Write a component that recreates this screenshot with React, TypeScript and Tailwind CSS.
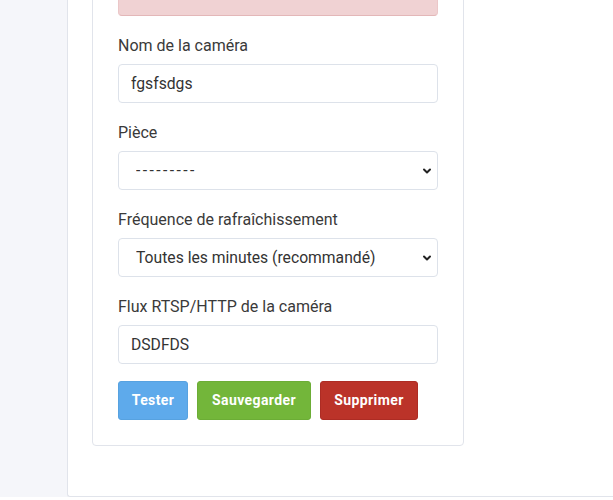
import { useState } from 'react';

const fieldClass =
  'w-full h-[39px] rounded-[4px] border border-[#dde2ea] bg-white px-3 text-[15.7px] text-[#333] outline-none';

const labelClass = 'block mb-2 text-[16px] leading-5 text-[#3a3a3a]';

const Chevron = () => (
  <svg
    className="pointer-events-none absolute right-[6px] top-1/2 -translate-y-1/2 w-[10px] h-[10px] text-[#222]"
    viewBox="0 0 10 10"
    fill="none"
    stroke="currentColor"
    strokeWidth="2"
    strokeLinecap="round"
    strokeLinejoin="round"
  >
    <path d="M2 3.5 5 6.5 8 3.5" />
  </svg>
);

const App = () => {
  const [name, setName] = useState('fgsfsdgs');
  const [room, setRoom] = useState('');
  const [freq, setFreq] = useState('60');
  const [url, setUrl] = useState('DSDFDS');

  return (
    <div
      className="min-h-screen bg-[#f5f6fa] pl-[67px] -mt-[84px] text-[#333]"
      style={{ fontFamily: 'Roboto, "Noto Sans", sans-serif' }}
    >
      <div className="bg-white border-l border-b border-[#e1e4eb] rounded-bl-[3px] pt-[25px] pl-[24px] pb-[50px]">
        <div className="w-[372px] rounded-[4px] border border-[#e1e4eb] bg-white px-[25px] pt-[24px] pb-[25px]">
          {/* Error alert */}
          <div className="h-[50px] mb-5 rounded-[4px] bg-[#f0d2d3] border border-[#ebc7c8] border-b-[#e3b7b8]" />

          <div className="mb-5">
            <label className={labelClass}>Nom de la caméra</label>
            <input className={fieldClass} value={name} onChange={(e) => setName(e.target.value)} />
          </div>

          <div className="mb-5">
            <label className={labelClass}>Pièce</label>
            <div className="relative">
              <select
                className={`${fieldClass} appearance-none pl-[17px] tracking-[2.4px]`}
                value={room}
                onChange={(e) => setRoom(e.target.value)}
              >
                <option value="">---------</option>
                <option value="salon">Salon</option>
              </select>
              <Chevron />
            </div>
          </div>

          <div className="mb-5">
            <label className={labelClass}>Fréquence de rafraîchissement</label>
            <div className="relative">
              <select
                className={`${fieldClass} appearance-none pl-[17px]`}
                value={freq}
                onChange={(e) => setFreq(e.target.value)}
              >
                <option value="60">Toutes les minutes (recommandé)</option>
                <option value="300">Toutes les 5 minutes</option>
              </select>
              <Chevron />
            </div>
          </div>

          <div className="mb-[17px]">
            <label className={labelClass}>Flux RTSP/HTTP de la caméra</label>
            <input className={fieldClass} value={url} onChange={(e) => setUrl(e.target.value)} />
          </div>

          <div className="flex gap-[9px]">
            <button className="h-[39px] w-[70px] rounded-[3px] border border-[#57a2e0] bg-[#5eaaeb] text-[14px] font-bold tracking-[0.4px] text-white">
              Tester
            </button>
            <button className="h-[39px] w-[114px] rounded-[3px] border border-[#6cad36] bg-[#73b63a] text-[14px] font-bold tracking-[0.4px] text-white">
              Sauvegarder
            </button>
            <button className="h-[39px] w-[98px] rounded-[3px] border border-[#ad2c24] bg-[#bb3329] text-[14px] font-bold tracking-[0.4px] text-white">
              Supprimer
            </button>
          </div>
        </div>
      </div>
    </div>
  );
};

export default App;
